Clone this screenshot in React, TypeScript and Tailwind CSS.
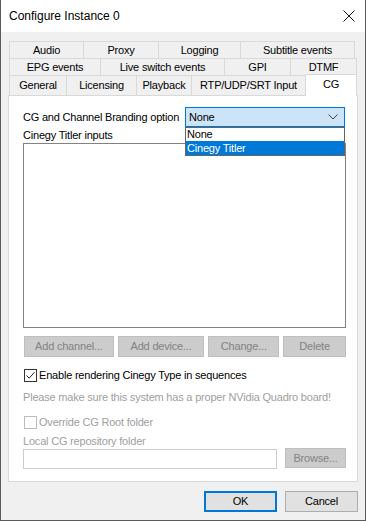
import React from "react";

const rowOne = [
  { label: "Audio", w: "w-[75px]" },
  { label: "Proxy", w: "w-[76px]" },
  { label: "Logging", w: "w-[83px]" },
  { label: "Subtitle events", w: "w-[115px]" }
];

const rowTwo = [
  { label: "EPG events", w: "w-[92px]" },
  { label: "Live switch events", w: "w-[125px]" },
  { label: "GPI", w: "w-[67px]" },
  { label: "DTMF", w: "w-[67px]" }
];

const rowThree = [
  { label: "General", w: "w-[58px]" },
  { label: "Licensing", w: "w-[71px]" },
  { label: "Playback", w: "w-[56px]" },
  { label: "RTP/UDP/SRT Input", w: "w-[115px]" }
];

const TabRow = ({ tabs }: { tabs: { label: string; w: string }[] }) => {
  return (
    <div className="flex h-[18px] -mt-px">
      {tabs.map((tab, i) => (
        <div
          key={tab.label}
          className={`${tab.w} ${i > 0 ? "-ml-px" : ""} h-full border border-[#d9d9d9] bg-[#f0f0f0] flex items-center justify-center leading-none`}
        >
          {tab.label}
        </div>
      ))}
    </div>
  );
};

const DisabledButton = ({ label, w }: { label: string; w: string }) => (
  <div
    className={`${w} h-[21px] flex items-center justify-center bg-[#cccccc] border border-[#bfbfbf] text-[#838383]`}
  >
    {label}
  </div>
);

const CheckBox = ({ checked, disabled }: { checked?: boolean; disabled?: boolean }) => (
  <div
    className={`w-[13px] h-[13px] flex-none border bg-white flex items-center justify-center ${
      disabled ? "border-[#bcbcbc]" : "border-[#333333]"
    }`}
  >
    {checked && (
      <svg width="11" height="11" viewBox="0 0 11 11">
        <path d="M1.5 5.5 L4.2 8.2 L9.5 2.2" fill="none" stroke="#222" strokeWidth="1" />
      </svg>
    )}
  </div>
);

const App = () => {
  return (
    <div
      className="w-[366px] h-[521px] bg-[#f0f0f0] border-x border-b border-[#5a5a5a] flex flex-col text-[11px] tracking-[-0.2px] text-black overflow-hidden whitespace-nowrap"
      style={{ fontFamily: '"Liberation Sans", Arial, sans-serif' }}
    >
      {/* title bar */}
      <div className="h-[32px] flex-none bg-white flex items-center justify-between pl-[8px] pr-[10px]">
        <span className="text-[12px] tracking-normal">Configure Instance 0</span>
        <svg width="12" height="12" viewBox="0 0 12 12">
          <path d="M0.5 0.5 L11.5 11.5 M11.5 0.5 L0.5 11.5" stroke="#111" strokeWidth="1" />
        </svg>
      </div>

      <div className="pl-[6px] pr-[6px] pt-[9px]">
        <div className="pl-[2px] pt-px">
          <TabRow tabs={rowOne} />
          <TabRow tabs={rowTwo} />
          <div className="flex items-end -mt-px h-[20px]">
            <div className="flex h-[20px] self-end">
              {rowThree.map((tab, i) => (
                <div
                  key={tab.label}
                  className={`${tab.w} ${i > 0 ? "-ml-px" : ""} h-full border border-b-0 border-[#d9d9d9] bg-[#f0f0f0] flex items-center justify-center leading-none`}
                >
                  {tab.label}
                </div>
              ))}
            </div>
            <div className="w-[52px] -ml-px h-[22px] relative z-10 -mb-px border border-b-0 border-[#d9d9d9] bg-white flex items-center justify-center pb-[3px] leading-none">
              CG
            </div>
          </div>
        </div>

        {/* panel */}
        <div className="ml-px w-[350px] h-[387px] bg-white border border-[#d9d9d9] pl-[14px] pr-[11px] pt-[11px]">
          <div className="flex items-center h-[20px]">
            <span className="w-[162px] flex-none">CG and Channel Branding option</span>
            <div className="relative w-[160px] h-[20px]">
              <div className="w-full h-full border border-[#0078d7] bg-[#cce4f7] flex items-center justify-between pl-[3px] pr-[6px]">
                <span>None</span>
                <svg width="10" height="6" viewBox="0 0 10 6">
                  <path d="M0.5 0.5 L5 5 L9.5 0.5" fill="none" stroke="#444" strokeWidth="1" />
                </svg>
              </div>
              <div className="absolute left-0 top-full w-[160px] h-[29px] bg-white border border-[#646464] z-20 flex flex-col">
                <div className="h-[13px] flex items-center pl-px leading-none">None</div>
                <div className="h-[14px] flex items-center pl-px bg-[#0078d7] text-white leading-none">
                  Cinegy Titler
                </div>
              </div>
            </div>
          </div>

          <div className="h-[16px] flex items-center">Cinegy Titler inputs</div>

          <div className="h-[185px] border border-[#828282] bg-white" />

          <div className="flex gap-[4px] mt-[8px] pl-px">
            <DisabledButton label="Add channel..." w="w-[90px]" />
            <DisabledButton label="Add device..." w="w-[87px]" />
            <DisabledButton label="Change..." w="w-[71px]" />
            <DisabledButton label="Delete" w="w-[63px]" />
          </div>

          <div className="flex items-center gap-[2px] mt-[12px] pl-px h-[13px]">
            <CheckBox checked />
            <span>Enable rendering Cinegy Type in sequences</span>
          </div>

          <div className="h-[16px] mt-[7px] flex items-center text-[#a0a0a0]">
            Please make sure this system has a proper NVidia Quadro board!
          </div>

          <div className="flex items-center gap-[2px] mt-[11px] pl-px h-[13px] text-[#a0a0a0]">
            <CheckBox disabled />
            <span>Override CG Root folder</span>
          </div>

          <div className="h-[14px] mt-[5px] flex items-center text-[#a0a0a0]">Local CG repository folder</div>

          <div className="flex items-start justify-between">
            <div className="w-[254px] h-[20px] border border-[#cccccc] bg-white mt-px" />
            <div className="w-[61px] h-[20px] flex items-center justify-center bg-[#cccccc] border border-[#bfbfbf] text-[#838383]">
              Browse...
            </div>
          </div>
        </div>

        {/* footer buttons */}
        <div className="flex justify-end gap-[8px] mt-[9px] pr-[1px]">
          <div className="w-[73px] h-[21px] bg-[#e1e1e1] border-2 border-[#0078d7] flex items-center justify-center">
            OK
          </div>
          <div className="w-[73px] h-[21px] bg-[#e1e1e1] border border-[#adadad] flex items-center justify-center">
            Cancel
          </div>
        </div>
      </div>
    </div>
  );
};

export default App;
